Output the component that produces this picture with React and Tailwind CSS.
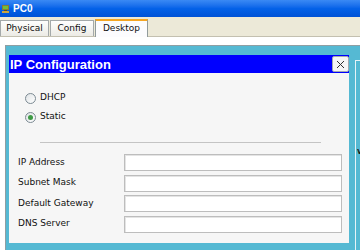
import React from 'react';

const font = { fontFamily: '"DejaVu Sans", Verdana, sans-serif' };

function PcIcon() {
  return (
    <svg width="9" height="9" viewBox="0 0 9 9" className="shrink-0">
      <rect x="1" y="1" width="7" height="5" fill="#8a7a3a" />
      <rect x="2" y="2" width="5" height="3" fill="#6fbf3a" />
      <rect x="3" y="6" width="3" height="1" fill="#5a4a20" />
      <rect x="1" y="7" width="7" height="2" fill="#c9a642" />
    </svg>
  );
}

function Tab({ label, active, className = '' }) {
  if (active) {
    return (
      <div
        className={`h-[18px] -mb-px flex items-center justify-center bg-[#fcfcfe] border-x border-[#919b9c] border-t-2 border-t-[#f5a623] text-[9px] text-[#111] ${className}`}
      >
        {label}
      </div>
    );
  }
  return (
    <div
      className={`h-[16px] flex items-center justify-center bg-gradient-to-b from-[#fefefe] to-[#ecebe5] border-x border-t border-[#a4a9aa] text-[9px] text-[#111] ${className}`}
    >
      {label}
    </div>
  );
}

function Radio({ checked, label }) {
  return (
    <div className="flex items-center gap-[4px] h-[12px]">
      <span className="w-[11px] h-[11px] rounded-full border border-[#7c8a93] bg-gradient-to-br from-[#dfe3e6] to-[#ffffff] flex items-center justify-center">
        {checked && <span className="w-[5px] h-[5px] rounded-full bg-[#3f9a45]" />}
      </span>
      <span className="text-[9px] text-[#111]">{label}</span>
    </div>
  );
}

function Field({ label }) {
  return (
    <div className="flex items-center h-[17px]">
      <span className="w-[106px] text-[9px] text-[#111]">{label}</span>
      <div className="w-[218px] h-[17px] bg-white border border-[#bdbdbd] shadow-[inset_1px_1px_0_#e4e4e4]" />
    </div>
  );
}

export default function App() {
  return (
    <div className="w-[360px] h-[250px] overflow-hidden bg-white flex flex-col" style={font}>
      {/* window title */}
      <div className="h-[17px] shrink-0 flex items-center gap-[3px] pl-[1px] bg-gradient-to-b from-[#3a8af4] via-[#0462e8] to-[#0052d6]">
        <PcIcon />
        <span className="text-white font-bold text-[10px]" style={{ fontFamily: '"Liberation Sans", Arial, sans-serif' }}>
          PC0
        </span>
      </div>

      {/* tabs */}
      <div className="h-[20px] shrink-0 bg-[#ece9d8] border-b border-[#c3c0b0] flex items-end gap-px">
        <Tab label="Physical" className="w-[49px]" />
        <Tab label="Config" className="w-[44px]" />
        <Tab label="Desktop" active className="w-[53px]" />
      </div>

      {/* desktop area */}
      <div className="flex-1 pt-[8px] pl-[5px]">
        <div className="h-full bg-[#55b9d3] border-l border-t border-[#8f9ea3] pt-[9px] pl-[3px] flex">
          {/* IP Configuration dialog */}
          <div className="w-[340px] h-[188px] shrink-0 bg-[#f6f6f6] flex flex-col">
            <div className="h-[18px] bg-[#0000ff] flex items-center justify-between pl-px">
              <span className="text-white font-bold text-[13px] leading-none" style={{ fontFamily: '"Liberation Sans", Arial, sans-serif' }}>
                IP Configuration
              </span>
              <div className="w-[17px] h-[16px] bg-[#f6f6f6] border border-[#a3a9ae] rounded-[2px] flex items-center justify-center">
                <svg width="9" height="9" viewBox="0 0 9 9">
                  <path d="M1 1L8 8M8 1L1 8" stroke="#333" strokeWidth="1" />
                </svg>
              </div>
            </div>

            <div className="pl-[16px] pt-[19px] flex flex-col gap-[7px]">
              <Radio label="DHCP" />
              <Radio label="Static" checked />
            </div>

            <div className="ml-[31px] mr-[28px] mt-[19px] h-px bg-[#c4c4c4]" />

            <div className="pl-[9px] pt-[11px] flex flex-col gap-[3.5px]">
              <Field label="IP Address" />
              <Field label="Subnet Mask" />
              <Field label="Default Gateway" />
              <Field label="DNS Server" />
            </div>
          </div>

          {/* next window peeking in */}
          <div className="ml-[6px] mt-[5px] flex-1 border-l border-t border-[#e6f3f7] pl-[1px] pt-[80px] leading-none">
            <span className="text-[8px] leading-none text-[#1a1a1a] font-bold">v</span>
          </div>
        </div>
      </div>
    </div>
  );
}
